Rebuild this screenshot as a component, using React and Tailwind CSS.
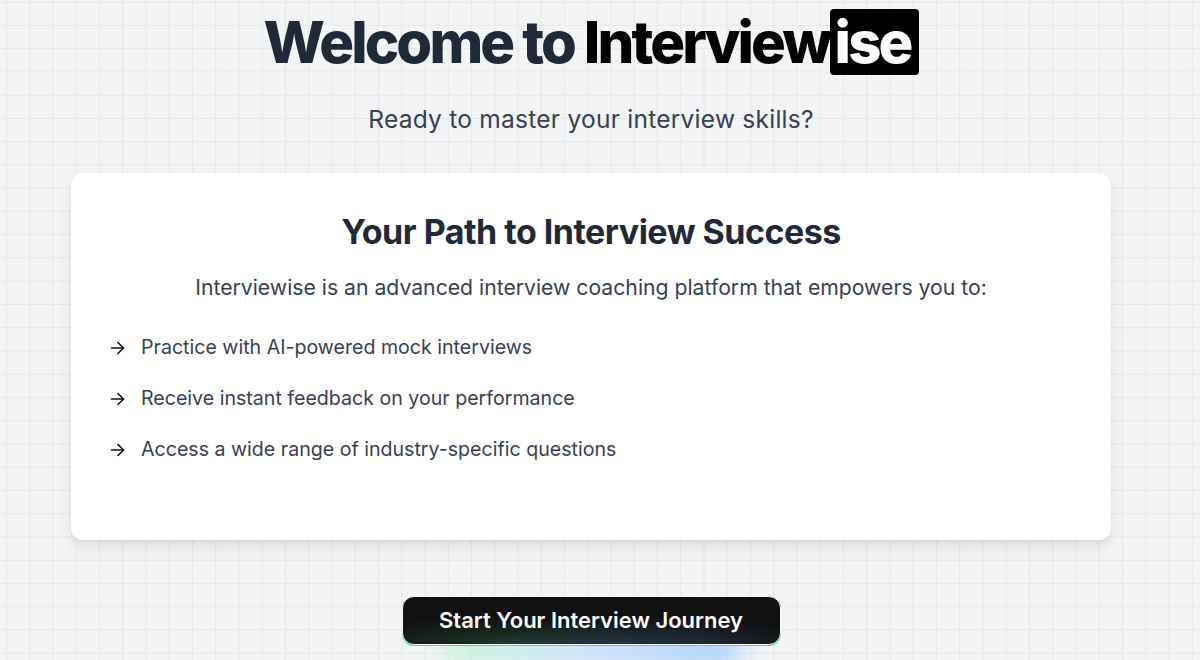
import React from "react";

function Arrow() {
  return (
    <svg width="15" height="14" viewBox="0 0 15 14" fill="none" stroke="#111" strokeWidth="1.6" strokeLinecap="round" strokeLinejoin="round" className="shrink-0">
      <path d="M1.5 7h12" />
      <path d="M8 1.5L13.5 7 8 12.5" />
    </svg>
  );
}

export default function App() {
  const items = [
    "Practice with AI-powered mock interviews",
    "Receive instant feedback on your performance",
    "Access a wide range of industry-specific questions",
  ];
  return (
    <div
      className="w-[1200px] h-[660px] overflow-hidden bg-[#f3f4f6] bg-[linear-gradient(to_right,#e6e7ea_1px,transparent_1px),linear-gradient(to_bottom,#e6e7ea_1px,transparent_1px)] bg-[size:23.25px_23.25px] bg-[position:6px_1.7px]"
      style={{ fontFamily: "Inter, 'Noto Sans', sans-serif" }}
    >
      <div className="w-[1182px] flex flex-col items-center">
        <h1 className="mt-[9px] flex items-center h-[66px] text-[58px] leading-none font-extrabold tracking-[-2.85px]">
          <span className="text-[#1f2937]">Welcome to&nbsp;</span>
          <span className="text-black">Interview</span>
          <span className="bg-black text-white rounded-[4px] h-[66px] flex items-center pl-[5px] pr-[8px]">ise</span>
        </h1>
        <p className="mt-[29px] text-[24.5px] leading-[30px] text-[#374151] tracking-[0.25px]">
          Ready to master your interview skills?
        </p>
        <div className="mt-[39px] w-[1040px] h-[367px] bg-white rounded-[12px] shadow-[0_8px_16px_rgba(0,0,0,0.08),0_2px_4px_rgba(0,0,0,0.05)] px-[39px] pt-[39px]">
          <h2 className="text-center text-[34px] leading-[39px] font-bold text-[#1f2937] tracking-[-0.5px]">
            Your Path to Interview Success
          </h2>
          <p className="mt-[23px] text-center text-[21.2px] leading-[27px] text-[#374151]">
            Interviewise is an advanced interview coaching platform that empowers you to:
          </p>
          <ul className="mt-[33px] flex flex-col gap-[24px]">
            {items.map((t) => (
              <li key={t} className="flex items-center gap-[16px] text-[19.6px] leading-[27px] text-[#374151]">
                <Arrow />
                <span>{t}</span>
              </li>
            ))}
          </ul>
        </div>
        <div className="relative mt-[56px]">
          <div className="absolute left-[40px] right-[40px] top-[32px] h-[40px] rounded-full bg-[linear-gradient(to_right,#bbf7d0,#bfdbfe,#93c5fd)] blur-[14px] opacity-80" />
          <button className="relative w-[379px] h-[49px] rounded-[12px] bg-[#111] text-white text-[22px] font-semibold border border-[#f9fafb] shadow-[0_1px_0_#60d394] overflow-hidden">
            <span className="absolute inset-0 bg-[radial-gradient(ellipse_40%_60%_at_25%_100%,rgba(74,222,128,0.18),transparent),radial-gradient(ellipse_45%_70%_at_65%_110%,rgba(96,165,250,0.25),transparent)]" />
            <span className="relative">Start Your Interview Journey</span>
          </button>
        </div>
      </div>
    </div>
  );
}
